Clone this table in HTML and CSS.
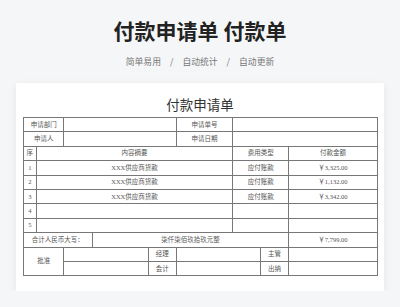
FILE: index.html
```html
<!DOCTYPE html>
<html lang="zh">
<head>
<meta charset="utf-8">
<link rel="stylesheet" href="styles.css">
</head>
<body>
<header class="hero">
  <h1 class="hero-title">付款申请单 付款单</h1>
  <p class="hero-sub"><span>简单易用</span><span class="sep">/</span><span>自动统计</span><span class="sep">/</span><span>自动更新</span></p>
</header>
<main class="card">
  <h2 class="form-title">付款申请单</h2>
  <table class="form">
    <colgroup>
      <col class="c1"><col class="c2"><col class="c3"><col class="c4"><col class="c5"><col class="c6"><col class="c7"><col class="c8"><col class="c9">
    </colgroup>
    <tr><td colspan="2">申请部门</td><td colspan="3"></td><td>申请单号</td><td colspan="3"></td></tr>
    <tr><td colspan="2">申请人</td><td colspan="3"></td><td>申请日期</td><td colspan="3"></td></tr>
    <tr><td>序</td><td colspan="5">内容摘要</td><td colspan="2">费用类型</td><td>付款金额</td></tr>
    <tr><td>1</td><td colspan="5">XXX供应商货款</td><td colspan="2">应付账款</td><td>￥3,325.00</td></tr>
    <tr><td>2</td><td colspan="5">XXX供应商货款</td><td colspan="2">应付账款</td><td>￥1,132.00</td></tr>
    <tr><td>3</td><td colspan="5">XXX供应商货款</td><td colspan="2">应付账款</td><td>￥3,342.00</td></tr>
    <tr><td>4</td><td colspan="5"></td><td colspan="2"></td><td></td></tr>
    <tr><td>5</td><td colspan="5"></td><td colspan="2"></td><td></td></tr>
    <tr><td colspan="3">合计人民币大写：</td><td colspan="5">柒仟柒佰玖拾玖元整</td><td>￥7,799.00</td></tr>
    <tr><td colspan="2" rowspan="2">批准</td><td colspan="2"></td><td>经理</td><td colspan="2"></td><td>主管</td><td></td></tr>
    <tr><td colspan="2"></td><td>会计</td><td colspan="2"></td><td>出纳</td><td></td></tr>
  </table>
</main>
</body>
</html>
```

FILE: styles.css
```css
html, body {
  margin: 0;
  padding: 0;
}
body {
  background: #f5f6f8;
  font-family: "Noto Sans CJK SC", "Noto Sans", sans-serif;
  color: #222;
}
.hero {
  padding-top: 17px;
  text-align: center;
}
.hero-title {
  margin: 0;
  font-size: 21px;
  line-height: 26px;
  font-weight: 700;
  color: #222;
}
.hero-sub {
  margin: 12px 0 0;
  font-size: 8.8px;
  line-height: 14px;
  color: #777;
}
.hero-sub .sep {
  margin: 0 9px;
}
.card {
  margin: 14px 16px 0;
  background: #fff;
  padding: 11px 7px 15px;
  box-shadow: 0 2px 8px rgba(0, 0, 0, 0.07);
}
.form-title {
  margin: 0;
  text-align: center;
  font-size: 13.5px;
  line-height: 20px;
  font-weight: 400;
  color: #333;
}
.form {
  margin-top: 3px;
  width: 100%;
  table-layout: fixed;
  border-collapse: collapse;
  border: 1.5px solid #666;
  font-family: "Liberation Serif", "Noto Sans CJK SC", serif;
  font-size: 6.5px;
  color: #555;
}
.form tr {
  height: 14.4px;
}
.form td {
  border: 1px solid #777;
  padding: 0;
  text-align: center;
  line-height: 8px;
  white-space: nowrap;
  overflow: hidden;
}
.c1 { width: 12.7px; }
.c2 { width: 27.6px; }
.c3 { width: 28.4px; }
.c4 { width: 56px; }
.c5 { width: 28px; }
.c6 { width: 56.6px; }
.c7 { width: 27.7px; }
.c8 { width: 28.3px; }
.c9 { width: 88.4px; }
```
